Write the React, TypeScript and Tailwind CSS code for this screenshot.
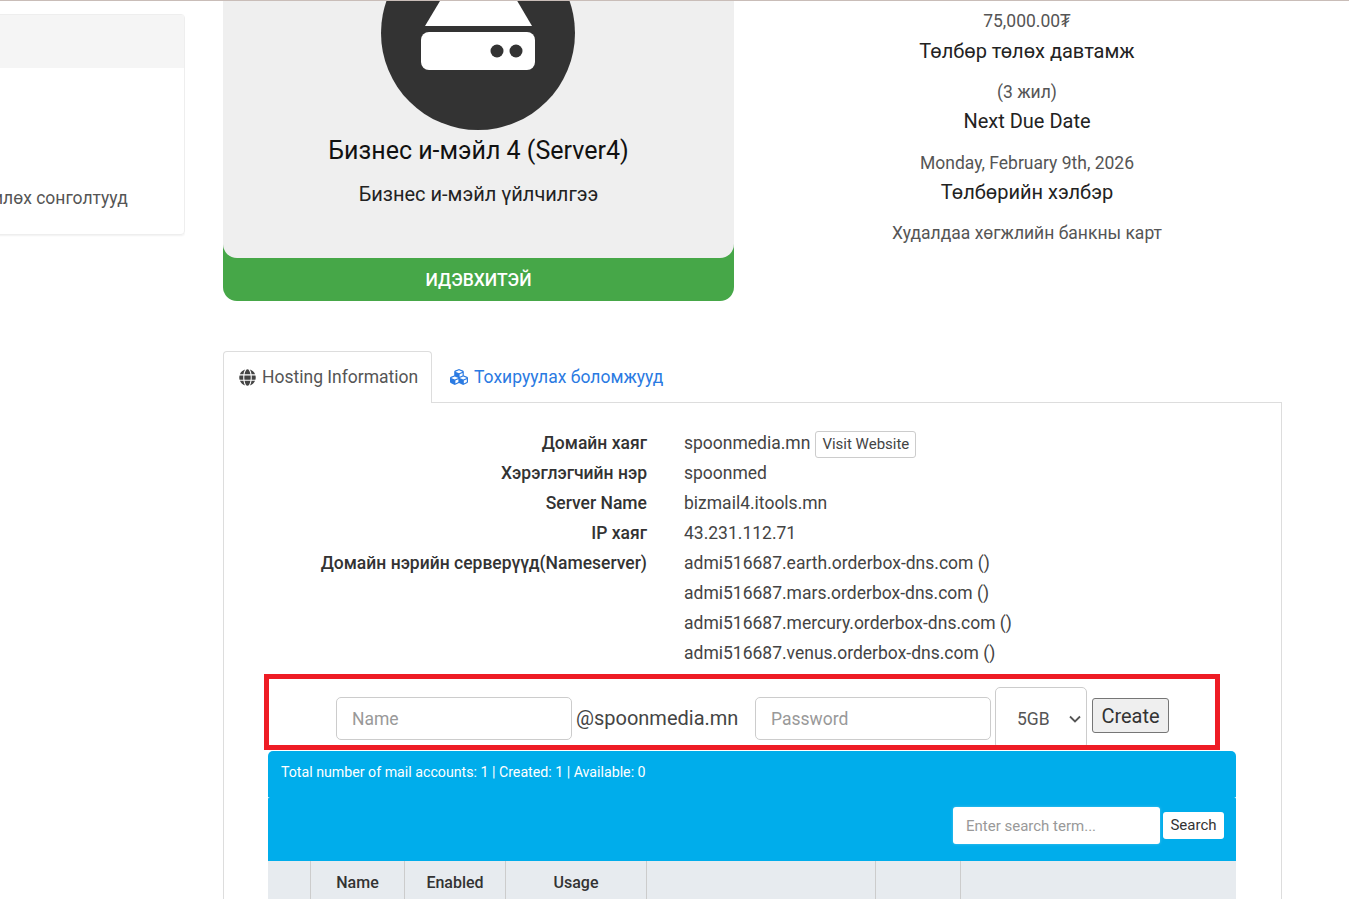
import React from "react";
import { FaCubes, FaGlobe } from "react-icons/fa";

const hostingRows = [
	["Домайн хаяг", "spoonmedia.mn"],
	["Хэрэглэгчийн нэр", "spoonmed"],
	["Server Name", "bizmail4.itools.mn"],
	["IP хаяг", "43.231.112.71"],
	["Домайн нэрийн серверүүд(Nameserver)", "admi516687.earth.orderbox-dns.com ()"],
	["", "admi516687.mars.orderbox-dns.com ()"],
	["", "admi516687.mercury.orderbox-dns.com ()"],
	["", "admi516687.venus.orderbox-dns.com ()"],
];

const billing = [
	["75,000.00₮", "Төлбөр төлөх давтамж", "mt-[-1px] mb-[6px]"],
	["(3 жил)", "Next Due Date", "mt-[-2px] mb-[7px]"],
	["Monday, February 9th, 2026", "Төлбөрийн хэлбэр", "mt-[-2px] mb-[6px]"],
	["Худалдаа хөгжлийн банкны карт", "", ""],
];

const columns = [
	["w-[43px]", ""],
	["w-[94px]", "Name"],
	["w-[101px]", "Enabled"],
	["w-[141px]", "Usage"],
	["w-[229px]", ""],
	["w-[85px]", ""],
	["flex-1", ""],
];

const ServerIcon = () => (
	<svg viewBox="0 0 194 194" className="ml-[-1px] mt-[-65px] block h-[194px] w-[194px]">
		<circle cx="97" cy="97" r="97" fill="#333333" />
		<path d="M44 90 L98 0 L151 90 Z" fill="#fff" />
		<rect x="40" y="96" width="114" height="38" rx="8" fill="#fff" />
		<circle cx="116" cy="115" r="6.5" fill="#333333" />
		<circle cx="135" cy="115" r="6.5" fill="#333333" />
	</svg>
);

export default function App() {
	return (
		<div className="h-[899px] overflow-hidden border-t border-[#c9bdb8] bg-white font-['Roboto',sans-serif] text-[#333]">
			<div className="flex">
				<aside className="w-[185px] shrink-0 overflow-hidden pt-[13px]">
					<div className="ml-[-20px] h-[221px] rounded-[4px] border border-[#eeeeee] shadow-[0_1px_2px_rgba(0,0,0,0.06)]">
						<div className="h-[53px] bg-[#f5f5f5]" />
						<p className="ml-[12px] mt-[118px] whitespace-nowrap text-[17.5px] leading-[24px] text-[#555]">
							илөх сонголтууд
						</p>
					</div>
				</aside>

				<main className="ml-[38px] w-[1059px] shrink-0">
					<div className="flex h-[349px] items-start">
						<div className="w-[511px] overflow-hidden rounded-b-[14px] bg-[#46a748]">
							<div className="flex h-[257px] flex-col items-center rounded-b-[14px] bg-[#efefef] text-[#111]">
								<ServerIcon />
								<h3 className="mt-[4px] text-[25px] leading-[34px]">Бизнес и-мэйл 4 (Server4)</h3>
								<p className="mt-[12px] text-[20px] leading-[28px] text-[#222]">Бизнес и-мэйл үйлчилгээ</p>
							</div>
							<div className="flex h-[43px] items-center justify-center pt-[2px] text-[17.5px] font-medium text-white">
								ИДЭВХИТЭЙ
							</div>
						</div>

						<div className="ml-[38px] w-[510px] text-center">
							{billing.map(([value, label, spacing]) => (
								<div key={value} className="flex flex-col items-center">
									<span className="h-[36px] pt-[9px] text-[17.5px] leading-[22px] text-[#555]">{value}</span>
									{label && (
										<span className={`${spacing} h-[30px] text-[20px] leading-[30px] text-[#222]`}>{label}</span>
									)}
								</div>
							))}
						</div>
					</div>

					<div className="flex h-[52px] items-end">
						<div className="z-10 mb-[-1px] flex h-[52px] w-[209px] items-center gap-[6px] rounded-t-[4px] border border-b-0 border-[#dddddd] bg-white pl-[15px] text-[17.5px] text-[#555]">
							<FaGlobe className="text-[17px] text-[#444]" />
							Hosting Information
						</div>
						<div className="flex h-[52px] items-center gap-[6px] pl-[18px] pt-[2px] text-[17.5px] text-[#2a7ae2]">
							<FaCubes className="text-[18px]" />
							Тохируулах боломжууд
						</div>
					</div>

					<section className="h-[600px] border border-[#dddddd] px-[40px] pt-[25px]">
						<div className="flex flex-col">
							{hostingRows.map(([label, value]) => (
								<div key={value} className="flex h-[30px] items-center text-[17.5px]">
									<span className="w-[383px] shrink-0 text-right font-medium text-[#333]">{label}</span>
									<span className="ml-[37px] text-[#444]">{value}</span>
									{label === "Домайн хаяг" && (
										<button className="ml-[5px] mt-[2px] h-[27px] rounded-[3px] border border-[#cccccc] px-[6px] text-[15px] text-[#444]">
											Visit Website
										</button>
									)}
								</div>
							))}
						</div>

						<div className="mt-[6px] flex h-[76px] w-[956px] items-start overflow-hidden border-[5px] border-[#ee1c25] pl-[67px] pt-[18px]">
							<input
								placeholder="Name"
								className="h-[43px] w-[236px] rounded-[5px] border border-[#cccccc] px-[15px] text-[17.5px] placeholder:text-[#999]"
							/>
							<span className="ml-[4px] w-[179px] text-[20px] leading-[43px] text-[#444]">@spoonmedia.mn</span>
							<input
								placeholder="Password"
								className="h-[43px] w-[236px] rounded-[5px] border border-[#cccccc] px-[15px] text-[17.5px] placeholder:text-[#999]"
							/>
							<div className="relative ml-[4px] mt-[-10px] h-[62px] w-[92px] shrink-0">
								<select className="h-full w-full appearance-none rounded-[5px] border border-[#cccccc] bg-white pl-[21px] pt-[2px] text-[17.5px] text-[#555]">
									<option>5GB</option>
								</select>
								<svg viewBox="0 0 12 8" className="pointer-events-none absolute left-[74px] top-[28px] h-[8px] w-[12px]">
									<path d="M1 1.5 L6 6.5 L11 1.5" fill="none" stroke="#555" strokeWidth="1.8" />
								</svg>
							</div>
							<button className="ml-[5px] mt-px h-[35px] w-[77px] shrink-0 rounded-[3px] border border-[#767676] bg-[#efefef] text-[20px] text-[#333]">
								Create
							</button>
						</div>

						<div className="ml-[4px] mt-px w-[968px]">
							<div className="h-[46px] rounded-t-[5px] bg-[#00adeb] pl-[13px] pt-[11px] text-[14.2px] leading-[20px] text-white">
								Total number of mail accounts: 1 | Created: 1 | Available: 0
							</div>
							<div className="flex h-[64px] items-start justify-end gap-[3px] rounded-t-[2px] bg-[#00adeb] pr-[12px] pt-[10px]">
								<input
									placeholder="Enter search term..."
									className="h-[37px] w-[207px] rounded-[3px] bg-white px-[13px] text-[15px] shadow-[0_0_3px_rgba(255,255,255,0.3)] placeholder:text-[#999]"
								/>
								<button className="mt-[5px] h-[27px] w-[61px] rounded-[3px] bg-white text-[15px] text-[#333]">
									Search
								</button>
							</div>
							<div className="flex h-[60px] bg-[#e7ebef]">
								{columns.map(([width, title], i) => (
									<div
										key={i}
										className={`${width} border-r border-[#cccccc] pt-[12px] text-center text-[16px] font-medium leading-[20px] text-[#333] last:border-r-0`}
									>
										{title}
									</div>
								))}
							</div>
						</div>
					</section>
				</main>
			</div>
		</div>
	);
}
